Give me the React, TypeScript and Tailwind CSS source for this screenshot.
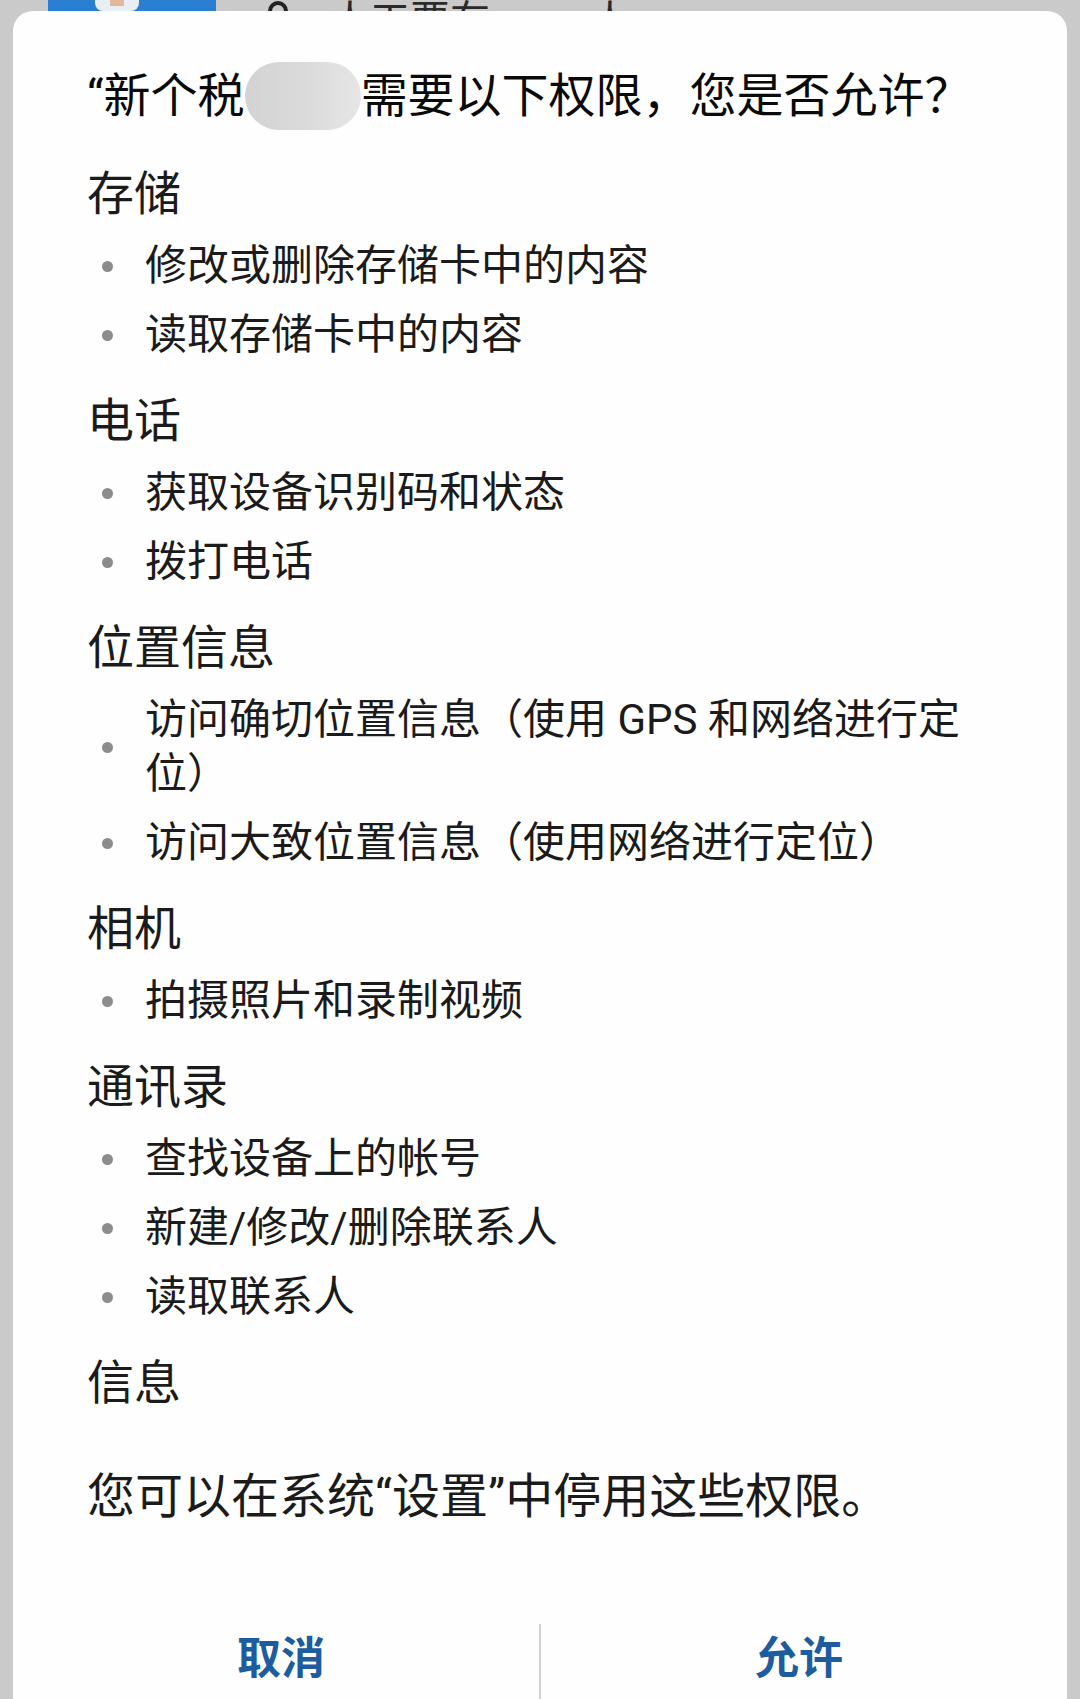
import React from "react";

const FONT = { fontFamily: '"Roboto", "Noto Sans CJK SC", "Noto Sans", sans-serif' };

type Group = { title: string; items: React.ReactNode[] };

const GROUPS: Group[] = [
  { title: "存储", items: ["修改或删除存储卡中的内容", "读取存储卡中的内容"] },
  { title: "电话", items: ["获取设备识别码和状态", "拨打电话"] },
  {
    title: "位置信息",
    items: [
      <>
        访问确切位置信息（使用 GPS 和网络进行定
        <br />
        位）
      </>,
      "访问大致位置信息（使用网络进行定位）",
    ],
  },
  { title: "相机", items: ["拍摄照片和录制视频"] },
  { title: "通讯录", items: ["查找设备上的帐号", "新建/修改/删除联系人", "读取联系人"] },
  { title: "信息", items: [] },
];

const PermissionGroup = ({ group }: { group: Group }) => (
  <div className="mt-[29px]">
    <p className="text-[47px] leading-[60px] text-[#1b1b1b]">{group.title}</p>
    {group.items.length > 0 && (
      <ul className="mt-[15px] flex flex-col gap-[15px]">
        {group.items.map((item, i) => (
          <li key={i} className="flex items-center">
            <span className="ml-[15px] w-[11px] h-[11px] rounded-full bg-[#8c8c8c] shrink-0" />
            <span className="ml-[32px] text-[42px] leading-[54px] text-[#1b1b1b]">{item}</span>
          </li>
        ))}
      </ul>
    )}
  </div>
);

export default function App() {
  return (
    <div className="h-[1699px] overflow-hidden bg-[#cacaca] flex flex-col" style={FONT}>
      {/* strip of the page behind the dialog */}
      <div className="h-[11px] overflow-hidden flex items-end shrink-0">
        <div className="ml-[48px] w-[168px] h-[11px] bg-[#2b7fd3] flex justify-center">
          <div className="ml-[-30px] w-[44px] h-[11px] bg-[#e8eef3] rounded-b-[8px] flex justify-center">
            <div className="w-[14px] h-[6px] bg-[#e2b79b]" />
          </div>
        </div>
        <div className="ml-[52px] flex items-end -mb-[30px] text-[40px] leading-[40px] text-[#2a2a2a]">
          <span className="w-[20px] h-[40px] rounded-full border-[4px] border-[#222]" />
          <span className="ml-[42px]">人工要在</span>
          <span className="ml-[100px]">人</span>
        </div>
      </div>

      <div className="mx-[13px] flex-1 bg-[#fefefe] rounded-t-[20px] flex flex-col">
        <div className="px-[74px] pt-[51px]">
          <h1 className="pb-[5px] text-[47px] leading-[60px] font-normal text-[#0a0a0a] whitespace-nowrap flex items-center">
            <span>“新个税</span>
            <span className="inline-block w-[116px] h-[68px] rounded-[34px] bg-gradient-to-r from-[#d3d3d3] via-[#dadada] to-[#e6e6e6]" />
            <span>需要以下权限，您是否允许？</span>
          </h1>

          {GROUPS.map((g) => (
            <PermissionGroup key={g.title} group={g} />
          ))}

          <p className="mt-[54px] text-[48px] leading-[60px] text-[#1b1b1b]">
            您可以在系统“设置”中停用这些权限。
          </p>
        </div>

        <div className="mt-[97px] flex h-[77px] px-[10px]">
          <button className="flex-1 text-[44px] font-bold text-[#1d5c9e] pb-[7px]">取消</button>
          <div className="w-[2px] bg-[#d2d2d2]" />
          <button className="flex-1 text-[44px] font-bold text-[#1d5c9e] pb-[7px]">允许</button>
        </div>
      </div>
    </div>
  );
}
